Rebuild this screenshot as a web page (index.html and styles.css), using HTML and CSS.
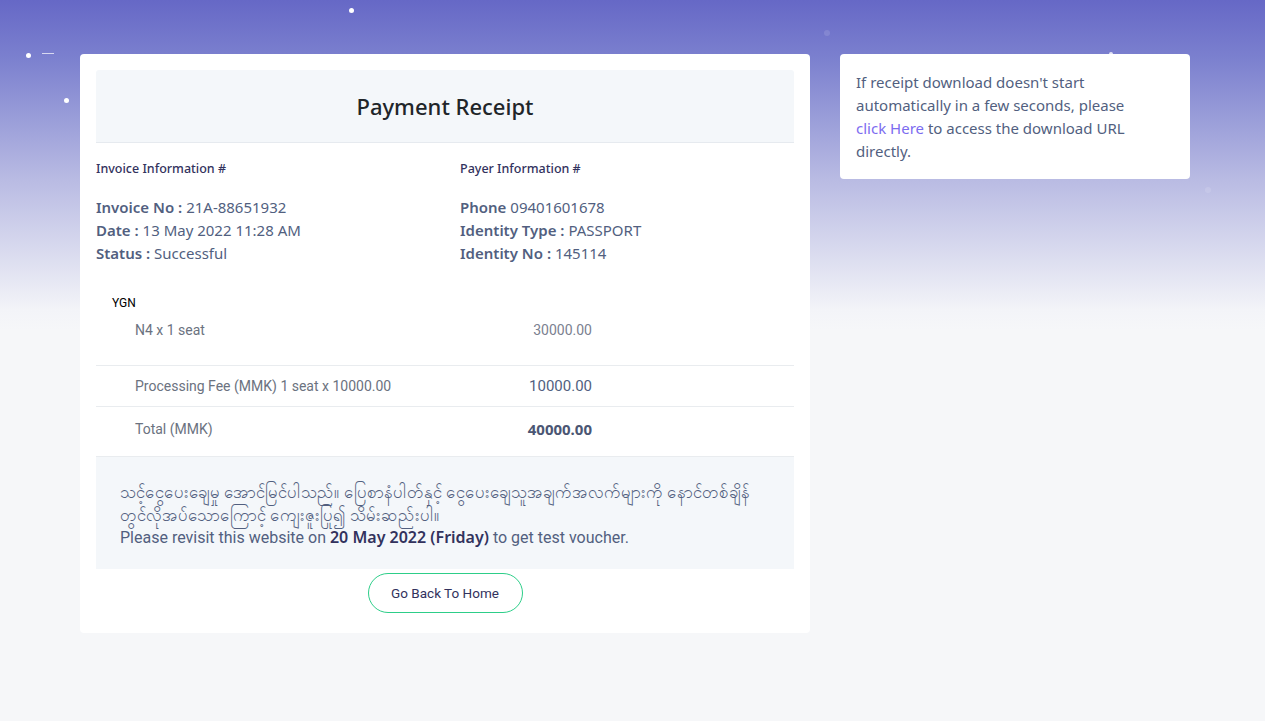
FILE: index.html
```html
<!DOCTYPE html>
<html lang="en">
<head>
<meta charset="utf-8">
<title>Payment Receipt</title>
<link rel="stylesheet" href="styles.css">
</head>
<body>
<div class="sky">
  <span class="star s1"></span>
  <span class="star s2"></span>
  <span class="star s3"></span>
  <span class="dash"></span>
  <span class="star faint f1"></span>
  <span class="star faint f2"></span>
  <span class="star faint f3"></span>
</div>
<div class="page">
  <main class="receipt">
    <div class="receipt-head">
      <h1 class="title">Payment Receipt</h1>
    </div>
    <div class="info-row">
      <div class="info-col">
        <h6 class="info-heading">Invoice Information #</h6>
        <p class="info-line"><b>Invoice No :</b> 21A-88651932</p>
        <p class="info-line"><b>Date :</b> 13 May 2022 11:28 AM</p>
        <p class="info-line"><b>Status :</b> Successful</p>
      </div>
      <div class="info-col">
        <h6 class="info-heading">Payer Information #</h6>
        <p class="info-line"><b>Phone</b> 09401601678</p>
        <p class="info-line"><b>Identity Type :</b> PASSPORT</p>
        <p class="info-line"><b>Identity No :</b> 145114</p>
      </div>
    </div>
    <div class="items">
      <div class="group-name">YGN</div>
      <div class="item first">
        <span class="item-label">N4 x 1 seat</span>
        <span class="item-amount">30000.00</span>
      </div>
      <div class="item fee">
        <span class="item-label">Processing Fee (MMK) 1 seat x 10000.00</span>
        <span class="item-amount">10000.00</span>
      </div>
      <div class="item total">
        <span class="item-label">Total (MMK)</span>
        <span class="item-amount">40000.00</span>
      </div>
    </div>
    <div class="notice">
      <p class="notice-mm">သင့်ငွေပေးချေမှု အောင်မြင်ပါသည်။ ပြေစာနံပါတ်နှင့် ငွေပေးချေသူအချက်အလက်များကို နောင်တစ်ချိန် တွင်လိုအပ်သောကြောင့် ကျေးဇူးပြု၍ သိမ်းဆည်းပါ။</p>
      <p class="notice-en">Please revisit this website on <b>20 May 2022 (Friday)</b> to get test voucher.</p>
    </div>
    <div class="actions">
      <a class="btn-home" href="#">Go Back To Home</a>
    </div>
  </main>
  <aside class="side-card">
    <p>If receipt download doesn't start automatically in a few seconds, please <a class="link" href="#">click Here</a> to access the download URL directly.</p>
  </aside>
</div>
</body>
</html>
```

FILE: styles.css
```css
* { box-sizing: border-box; }
html, body { margin: 0; padding: 0; }
body {
  min-height: 721px;
  font-family: "Noto Sans", "Open Sans", sans-serif;
  color: #525f7f;
  background: linear-gradient(180deg, #6668c6 0px, #7c81cf 60px, #b9bbe3 180px, #f3f4f8 310px, #f6f7f9 330px) no-repeat, #f6f7f9;
  position: relative;
}
.sky { position: absolute; inset: 0 0 auto 0; height: 320px; pointer-events: none; }
.star { position: absolute; width: 5px; height: 5px; border-radius: 50%; background: #fff; }
.s1 { left: 349px; top: 8px; }
.s2 { left: 26px; top: 53px; }
.s3 { left: 64px; top: 98px; }
.dash { position: absolute; left: 42px; top: 53px; width: 12px; height: 1px; background: rgba(255,255,255,0.7); }
.faint { width: 6px; height: 6px; background: rgba(255,255,255,0.12); }
.f1 { left: 824px; top: 30px; }
.f2 { left: 1109px; top: 52px; background: rgba(255,255,255,0.8); width: 4px; height: 4px; }
.f3 { left: 1205px; top: 187px; }

.page {
  position: relative;
  display: flex;
  align-items: flex-start;
  gap: 30px;
  padding: 54px 0 0 80px;
}

.receipt {
  width: 730px;
  background: #fff;
  border-radius: 4px;
  padding: 16px 16px 20px;
}
.receipt-head {
  height: 73px;
  background: #f4f7fa;
  border-bottom: 1px solid #e6eaef;
  border-radius: 3px 3px 0 0;
  display: flex;
  align-items: center;
  justify-content: center;
}
.title {
  margin: 0;
  font-size: 22px;
  font-weight: 500;
  color: #212529;
}

.info-row {
  display: grid;
  grid-template-columns: 1fr 1fr;
  margin: 0 -15px;
  padding-top: 16px;
}
.info-col { padding: 0 15px; }
.info-heading {
  margin: 0 0 17px;
  font-size: 12.5px;
  font-weight: 500;
  color: #32325d;
  line-height: 20px;
}
.info-line {
  margin: 0;
  font-size: 15px;
  line-height: 23px;
  color: #525f7f;
}
.info-line b { font-weight: 600; }

.items { margin-top: 29px; font-family: Roboto, "Noto Sans", sans-serif; }
.group-name {
  padding-left: 16px;
  font-size: 12px;
  color: #000;
  line-height: 18px;
}
.item {
  display: grid;
  grid-template-columns: 1fr 150px;
  padding: 0 202px 0 39px;
  border-bottom: 1px solid #e9ecef;
  align-items: center;
}
.item.first { height: 54px; align-items: start; padding-top: 10px; }
.item.fee { height: 41px; }
.item.total { height: 50px; padding-bottom: 6px; }
.item-label { font-size: 14px; color: #6b7280; }
.item-amount { text-align: right; font-size: 14px; color: #7b8190; }
.fee .item-amount { font-size: 15px; color: #525f7f; }
.total .item-amount { font-size: 15px; font-weight: 700; color: #4b5673; font-family: "Noto Sans", sans-serif; }

.notice {
  background: #f4f7fa;
  padding: 23px 24px 20px;
  font-size: 16px;
  color: #525f7f;
}
.notice p { margin: 0; line-height: 23px; }
.notice-mm { font-size: 16.7px; }
.notice-en { font-family: Roboto, "Noto Sans", sans-serif; }
.notice-en b { font-weight: 600; color: #32325d; font-family: "Noto Sans", sans-serif; }

.actions { display: flex; justify-content: center; padding-top: 4px; }
.btn-home {
  display: inline-flex;
  align-items: center;
  justify-content: center;
  width: 155px;
  height: 40px;
  border: 1px solid #2dce89;
  border-radius: 20px;
  font-size: 13.5px;
  color: #32325d;
  text-decoration: none;
  font-family: Roboto, "Noto Sans", sans-serif;
}

.side-card {
  width: 350px;
  background: #fff;
  border-radius: 4px;
  padding: 17px 16px 16px 16px;
}
.side-card p {
  margin: 0;
  font-size: 15px;
  line-height: 23px;
  color: #525f7f;
  max-width: 290px;
}
.link { color: #7c6cf0; text-decoration: none; }
```
